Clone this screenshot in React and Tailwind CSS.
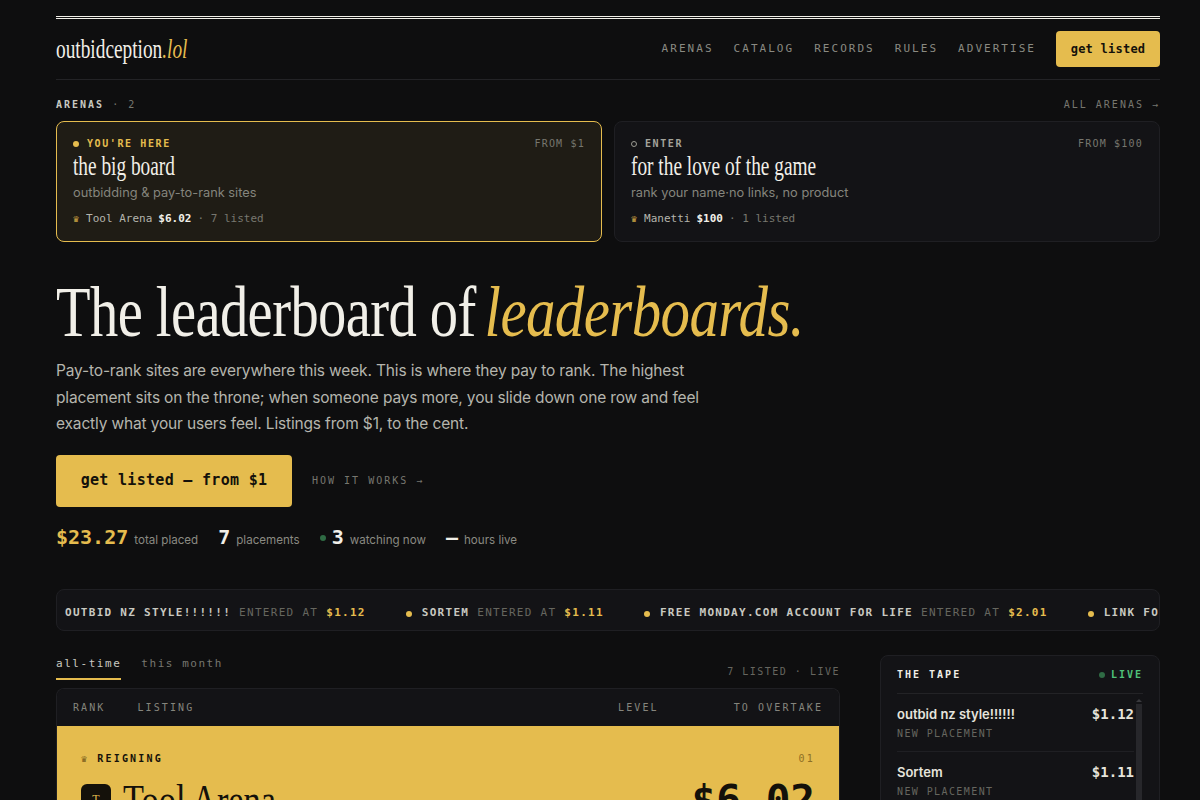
import React from 'react';

const mono = 'font-["DejaVu_Sans_Mono","Liberation_Mono",monospace]';
const serif = 'font-["Liberation_Serif",serif]';
const sans = 'font-["Inter","Noto_Sans",sans-serif]';

const arenas = [
  { active: true, tag: "YOU'RE HERE", from: 'FROM $1', title: 'the big board', sub: 'outbidding & pay-to-rank sites', king: 'Tool Arena', price: '$6.02', count: '7 listed' },
  { active: false, tag: 'ENTER', from: 'FROM $100', title: 'for the love of the game', sub: 'rank your name·no links, no product', king: 'Manetti', price: '$100', count: '1 listed' },
];

const ticker = [
  { name: 'OUTBID NZ STYLE!!!!!!', price: '$1.12' },
  { name: 'SORTEM', price: '$1.11', dot: true },
  { name: 'FREE MONDAY.COM ACCOUNT FOR LIFE', price: '$2.01', dot: true },
  { name: 'LINK FO', dot: true },
];

const tape = [
  { name: 'outbid nz style!!!!!!', price: '$1.12' },
  { name: 'Sortem', price: '$1.11' },
];

// the display face is narrower than anything installed, so squeeze the serif
function Narrow({ className = 'scale-x-[0.785]', children }) {
  return <span className={`inline-block origin-left whitespace-nowrap ${serif} ${className}`}>{children}</span>;
}

function ArenaCard({ a }) {
  return (
    <div className={`h-[121px] rounded-lg border px-4 pt-[14px] ${a.active ? 'border-[#e5bc4e] bg-[#1f1c15]' : 'border-[#1f1f23] bg-[#131316]'}`}>
      <div className="flex items-center justify-between">
        <div className={`flex items-center text-[10px] leading-4 font-bold tracking-[0.16em] ${mono}`}>
          {a.active
            ? <span className="mr-2 h-[6px] w-[6px] rounded-full bg-[#e5bc4e]" />
            : <span className="mr-2 h-[6px] w-[6px] rounded-full border border-[#9a9a92]" />}
          <span className={a.active ? 'text-[#e5bc4e]' : 'text-[#a3a39b]'}>{a.tag}</span>
        </div>
        <span className={`text-[10px] leading-4 tracking-[0.12em] text-[#77776f] ${mono}`}>{a.from}</span>
      </div>
      <div className="-mt-[3px] h-[30px] text-[28px] leading-[30px] text-[#f1efe8]">
        <Narrow className="scale-x-[0.69]">{a.title}</Narrow>
      </div>
      <div className={`mt-1 text-[12.8px] leading-5 text-[#85857d] ${sans}`}>{a.sub}</div>
      <div className={`mt-2 flex items-center text-[11px] leading-4 text-[#b5b5ad] ${mono}`}>
        <span className="mr-[7px] text-[10px] text-[#c9a243]">♛</span>
        <span>{a.king}</span>
        <span className="ml-[6px] font-bold text-[#f1efe8]">{a.price}</span>
        <span className="ml-[6px] text-[#77776f]">· {a.count}</span>
      </div>
    </div>
  );
}

function Stat({ value, label, gold, dot }) {
  return (
    <div className="flex items-baseline">
      {dot && <span className="mr-[6px] h-[6px] w-[6px] -translate-y-[3px] rounded-full bg-[#2f6b44]" />}
      <span className={`text-[20px] font-bold ${mono} ${gold ? 'text-[#e5bc4e]' : 'text-[#f1efe8]'}`}>{value}</span>
      <span className={`ml-[6px] text-[11.6px] text-[#8a8a82] ${sans}`}>{label}</span>
    </div>
  );
}

export default function App() {
  return (
    <div className="h-[800px] overflow-hidden bg-[#0e0e0f] pt-4 pr-10 pl-14">
      <div className="border-t-[3px] border-double border-[#f1efe8]" />
      <header className="flex h-[61px] items-center justify-between border-b border-[#232326]">
        <div className="-mt-1 h-8 text-[28px] leading-8 text-[#f1efe8]">
          <Narrow className="scale-x-[0.69]">outbidception<span className="text-[#e5bc4e] italic">.lol</span></Narrow>
        </div>
        <nav className={`flex items-center gap-5 text-[11px] tracking-[0.185em] text-[#8a8a82] ${mono}`}>
          <span>ARENAS</span>
          <span>CATALOG</span>
          <span>RECORDS</span>
          <span>RULES</span>
          <span>ADVERTISE</span>
          <button className="h-9 w-[104px] rounded bg-[#e5bc4e] text-[12px] font-bold tracking-[0.02em] text-[#14110a]">get listed</button>
        </nav>
      </header>

      <section className="mt-[15px]">
        <div className={`flex h-[18px] items-center justify-between text-[10px] tracking-[0.2em] ${mono}`}>
          <div className="text-[#c9c9c1]"><span className="font-bold">ARENAS</span><span className="text-[#77776f]"> · 2</span></div>
          <span className="text-[#77776f]">ALL ARENAS →</span>
        </div>
        <div className="mt-2 grid grid-cols-2 gap-3">
          {arenas.map(a => <ArenaCard key={a.title} a={a} />)}
        </div>
      </section>

      <section className="mt-[27px]">
        <h1 className="h-[78px] text-[72px] leading-[78px] tracking-[-0.01em] text-[#f1efe8]">
          <Narrow>The leaderboard of <span className="-ml-[6px] inline-block origin-left scale-x-[1.043] text-[#e5bc4e] italic">leaderboards.</span></Narrow>
        </h1>
        <p className={`mt-[11px] w-[680px] text-[15.5px] leading-[26.5px] tracking-[-0.01em] text-[#b5b5ad] ${sans}`}>
          Pay-to-rank sites are everywhere this week. This is where they pay to rank. The highest placement sits on the throne; when someone pays more, you slide down one row and feel exactly what your users feel. Listings from $1, to the cent.
        </p>
        <div className="mt-[17px] flex items-center">
          <button className={`h-[52px] w-[236px] rounded bg-[#e5bc4e] text-[15px] font-bold tracking-[0.02em] text-[#14110a] ${mono}`}>get listed — from $1</button>
          <span className={`ml-5 text-[10px] tracking-[0.2em] text-[#77776f] ${mono}`}>HOW IT WORKS →</span>
        </div>
        <div className="mt-[15px] flex h-[32px] items-baseline gap-5">
          <Stat value="$23.27" label="total placed" gold />
          <Stat value="7" label="placements" />
          <Stat value="3" label="watching now" dot />
          <Stat value="—" label="hours live" />
        </div>
      </section>

      <div className={`mt-[35px] flex h-[42px] items-center overflow-hidden rounded-lg border border-[#1f1f23] bg-[#131316] pt-2 pl-2 text-[11px] tracking-[0.117em] whitespace-nowrap ${mono}`}>
        {ticker.map(t => (
          <span key={t.name} className="mr-10 flex flex-none items-center">
            {t.dot && <span className="mr-[10px] h-[6px] w-[6px] rounded-full bg-[#e5bc4e]" />}
            <span className="font-bold text-[#c9c9c1]">{t.name}</span>
            {t.price && <span className="ml-2 text-[#66665f]">ENTERED AT</span>}
            {t.price && <span className="ml-2 font-bold text-[#e5bc4e]">{t.price}</span>}
          </span>
        ))}
      </div>

      <div className="mt-6 grid grid-cols-[784px_280px] gap-10">
        <div className="pt-[1px]">
          <div className="flex items-end justify-between">
            <div className={`flex gap-5 text-[11px] tracking-[0.14em] ${mono}`}>
              <span className="border-b-2 border-[#e5bc4e] pb-[6px] text-[#c9c9c1]">all-time</span>
              <span className="pb-[6px] text-[#77776f]">this month</span>
            </div>
            <span className={`mb-[1px] text-[10px] tracking-[0.15em] text-[#66665f] ${mono}`}>7 LISTED · LIVE</span>
          </div>
          <div className="mt-2 overflow-hidden rounded-t-lg border border-b-0 border-[#1f1f23]">
            <div className={`flex h-[37px] items-center justify-between bg-[#131316] px-4 text-[10px] tracking-[0.21em] text-[#85857d] ${mono}`}>
              <div className="flex gap-8"><span>RANK</span><span>LISTING</span></div>
              <div className="flex gap-[75px]"><span>LEVEL</span><span>TO OVERTAKE</span></div>
            </div>
            <div className="bg-[#e5bc4e] px-6 pt-[25px] text-[#14110a]">
              <div className={`flex items-center justify-between text-[10px] tracking-[0.22em] ${mono}`}>
                <div className="font-bold"><span className="mr-2 text-[#7c5f1c]">♛</span>REIGNING</div>
                <span className="text-[#8d6f24]">01</span>
              </div>
              <div className="mt-[9px] flex items-start justify-between">
                <div className="flex items-start">
                  <div className={`mt-[9px] flex h-[30px] w-[30px] items-center justify-center rounded-md bg-[#14110a] text-[12px] text-[#e5bc4e] ${serif}`}>T</div>
                  <div className="ml-3 h-[46px] text-[44px] leading-[46px]"><Narrow className="scale-x-[0.78]">Tool Arena</Narrow></div>
                </div>
                <span className={`mt-[2px] text-[41px] leading-[46px] font-bold ${mono}`}>$6.02</span>
              </div>
            </div>
          </div>
        </div>

        <aside className="h-[200px] rounded-lg border border-[#1f1f23] bg-[#131316] px-4 pt-[1px]">
          <div className={`flex h-[36px] items-center justify-between text-[10px] tracking-[0.2em] ${mono}`}>
            <span className="font-bold text-[#f1efe8]">THE TAPE</span>
            <span className="flex items-center font-bold text-[#4fc27a]">
              <span className="mr-[6px] h-[6px] w-[6px] rounded-full bg-[#2f6b44]" />LIVE
            </span>
          </div>
          <div className="flex border-t border-[#232326]">
            <div className="min-w-0 flex-1">
              {tape.map(t => (
                <div key={t.name} className="h-[58px] border-b border-[#1f1f23] pt-[10px]">
                  <div className="flex items-baseline justify-between">
                    <span className={`text-[13px] leading-5 font-semibold text-[#e6e4dc] ${sans}`}>{t.name}</span>
                    <span className={`text-[14px] leading-5 font-bold text-[#e6e4dc] ${mono}`}>{t.price}</span>
                  </div>
                  <div className={`mt-[2px] text-[10px] leading-4 tracking-[0.14em] text-[#66665f] ${mono}`}>NEW PLACEMENT</div>
                </div>
              ))}
            </div>
            <div className="ml-[2px] flex w-[6px] flex-col items-center pt-[5px]">
              <div className="border-x-[3px] border-b-[3px] border-x-transparent border-b-[#3a3a3e]" />
              <div className="mt-[2px] h-[200px] w-[6px] bg-[#27272b]" />
            </div>
            <div className="w-[1px]" />
          </div>
        </aside>
      </div>
    </div>
  );
}
